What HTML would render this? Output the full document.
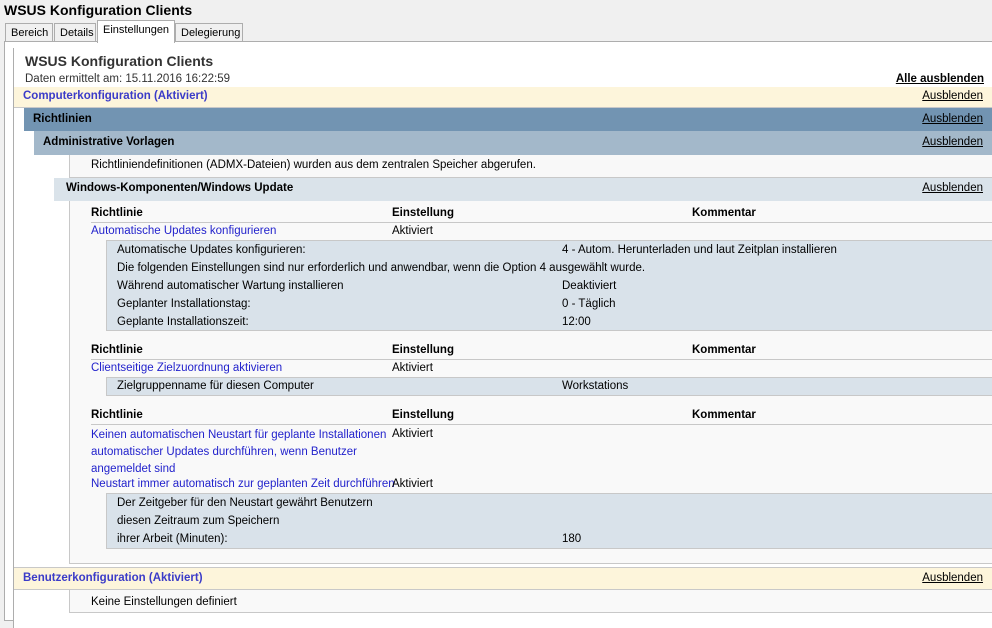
<!DOCTYPE html>
<html><head><meta charset="utf-8"><style>
*{margin:0;padding:0;box-sizing:border-box}
body{width:992px;height:619px;overflow:hidden;background:#f0f0f0;font-family:"Liberation Sans",Arial,sans-serif;font-size:11.5px;color:#000;position:relative}
.a{position:absolute;white-space:nowrap}
.b{font-weight:bold}
.l{color:#2222cc}
.u{text-decoration:underline;color:#000}
.r{position:absolute;right:8px}
</style></head><body>
<div class="a b" style="left:4px;top:2px;font-size:14px">WSUS Konfiguration Clients</div>
<div class="a" style="left:5px;top:23px;width:48px;height:19px;border:1px solid #adadad;background:#f0f0f0;padding:3px 0 0 5px;font-size:11px">Bereich</div>
<div class="a" style="left:54px;top:23px;width:42px;height:19px;border:1px solid #adadad;background:#f0f0f0;padding:3px 0 0 5px;font-size:11px">Details</div>
<div class="a" style="left:97px;top:20px;width:78px;height:23px;border:1px solid #adadad;border-bottom:none;background:#fff;padding:3px 0 0 5px;font-size:11px;z-index:2">Einstellungen</div>
<div class="a" style="left:175px;top:23px;width:68px;height:19px;border:1px solid #adadad;background:#f0f0f0;padding:3px 0 0 5px;font-size:11px">Delegierung</div>
<div class="a" style="left:4px;top:41px;width:990px;height:580px;border:1px solid #adadad;background:#fff"></div>
<div class="a" style="left:13px;top:48px;width:980px;height:580px;border-left:1px solid #adadad;background:#fff"></div>
<div class="a b" style="left:25px;top:53px;font-size:14px;color:#333">WSUS Konfiguration Clients</div>
<div class="a" style="left:25px;top:73px;color:#333">Daten ermittelt am: 15.11.2016 16:22:59</div>
<div class="a b u" style="right:8px;top:73px">Alle ausblenden</div>
<!-- computer config -->
<div class="a" style="left:14px;top:87px;width:978px;height:21px;background:#fdf5db;border-bottom:1px solid #c8c8c8"></div>
<div class="a b" style="left:23px;top:90px;color:#3b3bc8">Computerkonfiguration (Aktiviert)</div>
<div class="a u" style="right:9px;top:90px">Ausblenden</div>
<div class="a" style="left:24px;top:108px;width:968px;height:23px;background:#7294b2"></div>
<div class="a b" style="left:33px;top:113px">Richtlinien</div>
<div class="a u" style="right:9px;top:113px">Ausblenden</div>
<div class="a" style="left:34px;top:131px;width:958px;height:24px;background:#a3b8ca"></div>
<div class="a b" style="left:43px;top:136px">Administrative Vorlagen</div>
<div class="a u" style="right:9px;top:136px">Ausblenden</div>
<div class="a" style="left:69px;top:155px;width:923px;height:23px;background:#f8f8f8;border-left:1px solid #c8c8c8;border-bottom:1px solid #c8c8c8"></div>
<div class="a" style="left:91px;top:159px">Richtliniendefinitionen (ADMX-Dateien) wurden aus dem zentralen Speicher abgerufen.</div>
<div class="a" style="left:54px;top:178px;width:938px;height:23px;background:#dae3ea"></div>
<div class="a b" style="left:66px;top:182px">Windows-Komponenten/Windows Update</div>
<div class="a u" style="right:9px;top:182px">Ausblenden</div>
<div class="a" style="left:69px;top:201px;width:923px;height:363px;background:#f9f9f9;border-left:1px solid #c8c8c8;border-bottom:1px solid #c8c8c8"></div>
<!-- table 1 -->
<div class="a b" style="left:91px;top:207px">Richtlinie</div><div class="a b" style="left:392px;top:207px">Einstellung</div><div class="a b" style="left:692px;top:207px">Kommentar</div>
<div class="a" style="left:91px;top:222px;width:901px;border-top:1px solid #c8c8c8"></div>
<div class="a l" style="left:91px;top:225px">Automatische Updates konfigurieren</div><div class="a" style="left:392px;top:225px">Aktiviert</div>
<div class="a" style="left:106px;top:240px;width:886px;height:91px;background:#d9e2ea;border:1px solid #c8c8c8;border-right:none"></div>
<div class="a" style="left:117px;top:244px">Automatische Updates konfigurieren:</div><div class="a" style="left:562px;top:244px">4 - Autom. Herunterladen und laut Zeitplan installieren</div>
<div class="a" style="left:117px;top:262px">Die folgenden Einstellungen sind nur erforderlich und anwendbar, wenn die Option 4 ausgewählt wurde.</div>
<div class="a" style="left:117px;top:280px">Während automatischer Wartung installieren</div><div class="a" style="left:562px;top:280px">Deaktiviert</div>
<div class="a" style="left:117px;top:298px">Geplanter Installationstag:</div><div class="a" style="left:562px;top:298px">0 - Täglich</div>
<div class="a" style="left:117px;top:316px">Geplante Installationszeit:</div><div class="a" style="left:562px;top:316px">12:00</div>
<!-- table 2 -->
<div class="a b" style="left:91px;top:344px">Richtlinie</div><div class="a b" style="left:392px;top:344px">Einstellung</div><div class="a b" style="left:692px;top:344px">Kommentar</div>
<div class="a" style="left:91px;top:359px;width:901px;border-top:1px solid #c8c8c8"></div>
<div class="a l" style="left:91px;top:362px">Clientseitige Zielzuordnung aktivieren</div><div class="a" style="left:392px;top:362px">Aktiviert</div>
<div class="a" style="left:106px;top:377px;width:886px;height:19px;background:#d9e2ea;border:1px solid #c8c8c8;border-right:none"></div>
<div class="a" style="left:117px;top:380px">Zielgruppenname für diesen Computer</div><div class="a" style="left:562px;top:380px">Workstations</div>
<!-- table 3 -->
<div class="a b" style="left:91px;top:409px">Richtlinie</div><div class="a b" style="left:392px;top:409px">Einstellung</div><div class="a b" style="left:692px;top:409px">Kommentar</div>
<div class="a" style="left:91px;top:424px;width:901px;border-top:1px solid #c8c8c8"></div>
<div class="a l" style="left:91px;top:427px;line-height:17px">Keinen automatischen Neustart für geplante Installationen<br>automatischer Updates durchführen, wenn Benutzer<br>angemeldet sind</div><div class="a" style="left:392px;top:428px">Aktiviert</div>
<div class="a l" style="left:91px;top:478px">Neustart immer automatisch zur geplanten Zeit durchführen</div><div class="a" style="left:392px;top:478px">Aktiviert</div>
<div class="a" style="left:106px;top:493px;width:886px;height:56px;background:#d9e2ea;border:1px solid #c8c8c8;border-right:none"></div>
<div class="a" style="left:117px;top:497px">Der Zeitgeber für den Neustart gewährt Benutzern</div>
<div class="a" style="left:117px;top:515px">diesen Zeitraum zum Speichern</div>
<div class="a" style="left:117px;top:533px">ihrer Arbeit (Minuten):</div><div class="a" style="left:562px;top:533px">180</div>
<!-- user config -->
<div class="a" style="left:14px;top:567px;width:978px;height:23px;background:#fdf5db;border-top:1px solid #c8c8c8;border-bottom:1px solid #c8c8c8"></div>
<div class="a b" style="left:23px;top:572px;color:#3b3bc8">Benutzerkonfiguration (Aktiviert)</div>
<div class="a u" style="right:9px;top:572px">Ausblenden</div>
<div class="a" style="left:69px;top:590px;width:923px;height:23px;background:#f9f9f9;border-left:1px solid #c8c8c8;border-bottom:1px solid #c8c8c8"></div>
<div class="a" style="left:91px;top:596px">Keine Einstellungen definiert</div>
</body></html>
